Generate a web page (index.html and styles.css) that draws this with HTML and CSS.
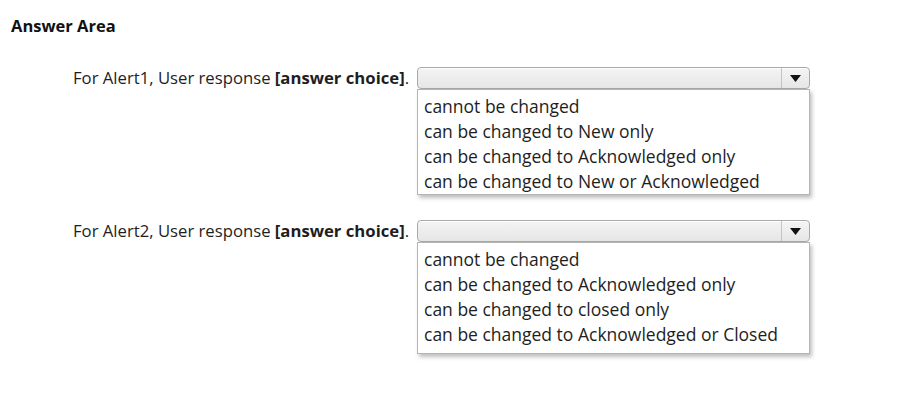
FILE: index.html
```html
<!DOCTYPE html>
<html lang="en">
<head>
<meta charset="utf-8">
<title>Answer Area</title>
<link rel="stylesheet" href="styles.css">
</head>
<body>
<main class="page">
  <h1 class="title">Answer Area</h1>

  <div class="question">
    <div class="label">For Alert1, User response <b>[answer choice]</b>.</div>
    <div class="combo">
      <div class="select">
        <span class="field"></span>
        <span class="btn"><svg width="11" height="7" viewBox="0 0 11 7"><path d="M0 0H11L5.5 7Z" fill="#111"/></svg></span>
      </div>
      <ul class="options">
        <li>cannot be changed</li>
        <li>can be changed to New only</li>
        <li>can be changed to Acknowledged only</li>
        <li>can be changed to New or Acknowledged</li>
      </ul>
    </div>
  </div>

  <div class="question">
    <div class="label">For Alert2, User response <b>[answer choice]</b>.</div>
    <div class="combo">
      <div class="select">
        <span class="field"></span>
        <span class="btn"><svg width="11" height="7" viewBox="0 0 11 7"><path d="M0 0H11L5.5 7Z" fill="#111"/></svg></span>
      </div>
      <ul class="options options-tall">
        <li>cannot be changed</li>
        <li>can be changed to Acknowledged only</li>
        <li>can be changed to closed only</li>
        <li>can be changed to Acknowledged or Closed</li>
      </ul>
    </div>
  </div>
</main>
</body>
</html>
```

FILE: styles.css
```css
html, body {
  margin: 0;
  padding: 0;
  background: #ffffff;
}

.page {
  width: 900px;
  height: 412px;
  font-family: "Open Sans", "Noto Sans", sans-serif;
  color: #1e1e1e;
  display: flex;
  flex-direction: column;
}

.title {
  margin: 0;
  padding: 17px 0 0 11px;
  font-size: 16.5px;
  line-height: 18px;
  font-weight: 700;
  letter-spacing: 0;
  color: #111;
}

.question {
  display: flex;
  align-items: flex-start;
  padding-left: 73px;
  margin-top: 32px;
}

.question + .question {
  margin-top: 25px;
}

.label {
  width: 344px;
  font-size: 16.7px;
  line-height: 22px;
  letter-spacing: 0;
  white-space: nowrap;
}

.label b {
  font-weight: 700;
}

.combo {
  width: 393px;
  display: flex;
  flex-direction: column;
}

.select {
  height: 20px;
  border: 1px solid #a9a9a9;
  border-radius: 4px;
  background: linear-gradient(#f4f4f4, #e6e6e6);
  display: flex;
  box-shadow: inset 0 1px 0 #ffffff;
}

.field {
  flex: 1;
}

.btn {
  width: 27px;
  border-left: 1px solid #c4c4c4;
  display: flex;
  align-items: center;
  justify-content: center;
}

.options {
  list-style: none;
  margin: 0;
  padding: 4px 0 0;
  border: 1px solid #b5b5b5;
  background: #ffffff;
  box-shadow: 2px 3px 4px rgba(0, 0, 0, 0.25);
  font-size: 17.5px;
  line-height: 25px;
  letter-spacing: 0;
}

.options-tall {
  padding-bottom: 6px;
}

.options li {
  padding-left: 6px;
  white-space: nowrap;
}
```
